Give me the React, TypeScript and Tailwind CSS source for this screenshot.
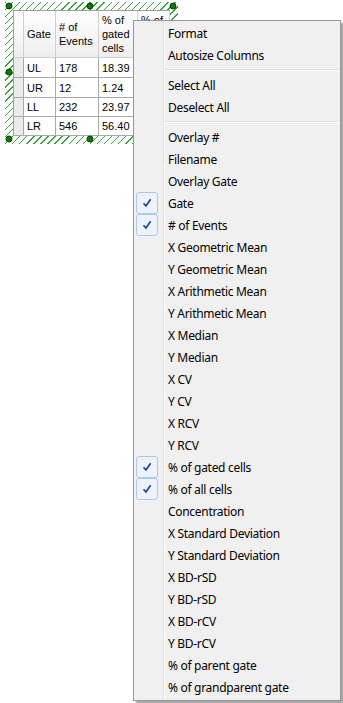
import React from 'react';

type MenuEntry = { label?: string; checked?: boolean; separator?: boolean };

const menuItems: MenuEntry[] = [
  { label: 'Format' },
  { label: 'Autosize Columns' },
  { separator: true },
  { label: 'Select All' },
  { label: 'Deselect All' },
  { separator: true },
  { label: 'Overlay #' },
  { label: 'Filename' },
  { label: 'Overlay Gate' },
  { label: 'Gate', checked: true },
  { label: '# of Events', checked: true },
  { label: 'X Geometric Mean' },
  { label: 'Y Geometric Mean' },
  { label: 'X Arithmetic Mean' },
  { label: 'Y Arithmetic Mean' },
  { label: 'X Median' },
  { label: 'Y Median' },
  { label: 'X CV' },
  { label: 'Y CV' },
  { label: 'X RCV' },
  { label: 'Y RCV' },
  { label: '% of gated cells', checked: true },
  { label: '% of all cells', checked: true },
  { label: 'Concentration' },
  { label: 'X Standard Deviation' },
  { label: 'Y Standard Deviation' },
  { label: 'X BD-rSD' },
  { label: 'Y BD-rSD' },
  { label: 'X BD-rCV' },
  { label: 'Y BD-rCV' },
  { label: '% of parent gate' },
  { label: '% of grandparent gate' },
];

const rows = [
  ['UL', '178', '18.39', '18.39'],
  ['UR', '12', '1.24', '1.24'],
  ['LL', '232', '23.97', '23.97'],
  ['LR', '546', '56.40', '56.40'],
];

function Handle({ className }: { className: string }) {
  return (
    <div
      className={`absolute w-[7px] h-[7px] rounded-full bg-[#0a7a0a] border border-[#024002] -translate-x-1/2 -translate-y-1/2 ${className}`}
    />
  );
}

function CheckBox() {
  return (
    <div className="w-[22px] h-[22px] rounded-[3px] border border-[#a9c9f2] bg-[#eef3fb] flex items-center justify-center">
      <svg width="10" height="10" viewBox="0 0 10 10">
        <path d="M1.5 5.2 L4 8 L8.6 1.2" fill="none" stroke="#1b3a92" strokeWidth="1.6" />
      </svg>
    </div>
  );
}

function StatsTable() {
  const headCell = 'bg-gradient-to-b from-white to-[#eeeeee] border-r border-b border-[#d0d0d0]';
  const dataCell = 'border-r border-b border-[#a9a9a9] flex items-center pl-[3px]';
  return (
    <div className="grid grid-cols-[10px_32px_43px_39px_32px] grid-rows-[47px_20px_20px_19px_19px] bg-white border-l border-t border-[#a0a0a0] w-[157px] text-[11px] text-black font-['Liberation_Sans',Arial,sans-serif] leading-[14px]">
      <div className={headCell} />
      <div className={`${headCell} flex items-center pl-[3px]`}>Gate</div>
      <div className={`${headCell} flex items-center pl-[3px]`}>
        # of
        <br />
        Events
      </div>
      <div className={`${headCell} flex items-center pl-[3px]`}>
        % of
        <br />
        gated
        <br />
        cells
      </div>
      <div className={`${headCell} flex items-center pl-[3px]`}>
        % of
        <br />
        all
        <br />
        cells
      </div>
      {rows.map((r) => (
        <React.Fragment key={r[0]}>
          <div className="bg-[#ebebeb] border-r border-b border-[#a9a9a9]" />
          {r.map((v, i) => (
            <div key={i} className={dataCell}>
              {v}
            </div>
          ))}
        </React.Fragment>
      ))}
    </div>
  );
}

export default function App() {
  return (
    <div className="relative w-[343px] h-[703px] bg-white overflow-hidden">
      {/* selected table with resize frame */}
      <div className="absolute left-[5px] top-[2px] p-[8px] bg-[repeating-linear-gradient(135deg,#3aa03a_0px,#3aa03a_1px,#ffffff_1px,#ffffff_5px)]">
        <StatsTable />
        <Handle className="left-[4px] top-[4px]" />
        <Handle className="left-[85px] top-[4px]" />
        <Handle className="left-[168px] top-[4px]" />
        <Handle className="left-[4px] top-[70px]" />
        <Handle className="left-[4px] top-[137px]" />
        <Handle className="left-[85px] top-[137px]" />
      </div>

      {/* context menu */}
      <div className="absolute left-[133px] top-[20px] w-[208px] bg-[#f0f0f0] border border-[#979797] pt-[1px] pb-[2px] shadow-[3px_3px_2px_rgba(0,0,0,0.35)] font-['Noto_Sans','Open_Sans',sans-serif] text-[12px] tracking-[-0.3px] text-black">
        <div className="absolute left-[29px] top-[1px] bottom-[1px] w-[2px] border-l border-[#e2e3e3] border-r border-r-white" />
        {menuItems.map((item, i) =>
          item.separator ? (
            <div key={i} className="relative h-[8px] flex items-center ml-[30px] mr-[1px]">
              <div className="w-full border-t border-[#e0e0e0] border-b border-b-white" />
            </div>
          ) : (
            <div key={i} className="relative flex items-center h-[22px]">
              <div className="w-[34px] h-[22px] pl-[2px] flex items-center">
                {item.checked && <CheckBox />}
              </div>
              <span className="whitespace-nowrap pt-[2px]">{item.label}</span>
            </div>
          )
        )}
      </div>
    </div>
  );
}
